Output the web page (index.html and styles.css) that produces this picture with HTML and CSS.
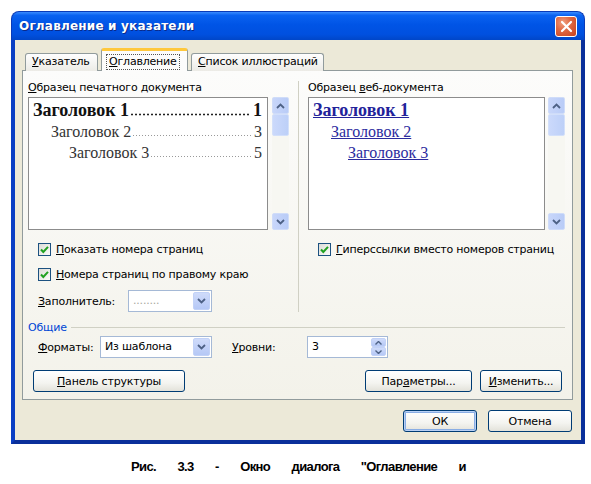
FILE: index.html
```html
<!DOCTYPE html>
<html lang="ru">
<head>
<meta charset="utf-8">
<title>Оглавление и указатели</title>
<link rel="stylesheet" href="styles.css">
</head>
<body>
<div class="window">
  <div class="titlebar">
    <span class="title">Оглавление и указатели</span>
    <span class="close"><svg width="13" height="13" viewBox="0 0 13 13"><path d="M2 2 L11 11 M11 2 L2 11" stroke="#fff" stroke-width="2.2" stroke-linecap="round"/></svg></span>
  </div>
  <div class="body">
    <div class="tabs">
      <div class="tab"><u>У</u>казатель</div>
      <div class="tab active"><span class="focus"><u>О</u>главление</span></div>
      <div class="tab"><u>С</u>писок иллюстраций</div>
    </div>
    <div class="panel">
      <div class="samples">
        <div class="col col-left">
          <div class="label"><u>О</u>бразец печатного документа</div>
          <div class="listrow">
            <div class="preview preview-print">
              <div class="toc l1"><span class="h">Заголовок 1</span><span class="dots"></span><span class="pg">1</span></div>
              <div class="toc l2"><span class="h">Заголовок 2</span><span class="dots"></span><span class="pg">3</span></div>
              <div class="toc l3"><span class="h">Заголовок 3</span><span class="dots"></span><span class="pg">5</span></div>
            </div>
            <div class="scrollbar">
              <span class="sbtn"><svg width="9" height="6" viewBox="0 0 9 6"><path d="M1 5 L4.5 1.5 L8 5" fill="none" stroke="#4d6185" stroke-width="1.8"/></svg></span>
              <span class="thumb"></span>
              <span class="track"></span>
              <span class="sbtn"><svg width="9" height="6" viewBox="0 0 9 6"><path d="M1 1 L4.5 4.5 L8 1" fill="none" stroke="#4d6185" stroke-width="1.8"/></svg></span>
            </div>
          </div>
          <div class="check"><span class="box"><svg width="13" height="13" viewBox="0 0 13 13"><path d="M3 6.5 L5.3 9 L10 3.8" fill="none" stroke="#21a121" stroke-width="2"/></svg></span><span><u>П</u>оказать номера страниц</span></div>
          <div class="check"><span class="box"><svg width="13" height="13" viewBox="0 0 13 13"><path d="M3 6.5 L5.3 9 L10 3.8" fill="none" stroke="#21a121" stroke-width="2"/></svg></span><span><u>Н</u>омера страниц по правому краю</span></div>
          <div class="fillrow">
            <span class="fieldlabel"><u>З</u>аполнитель:</span>
            <div class="combo combo-fill disabled">
              <span class="value">........</span>
              <span class="arrow"><svg width="9" height="6" viewBox="0 0 9 6"><path d="M1 1 L4.5 4.5 L8 1" fill="none" stroke="#4d6185" stroke-width="1.8"/></svg></span>
            </div>
          </div>
        </div>
        <div class="col col-right">
          <div class="label">Образец <u>в</u>еб-документа</div>
          <div class="listrow">
            <div class="preview preview-web">
              <div class="link l1">Заголовок 1</div>
              <div class="link l2">Заголовок 2</div>
              <div class="link l3">Заголовок 3</div>
            </div>
            <div class="scrollbar">
              <span class="sbtn"><svg width="9" height="6" viewBox="0 0 9 6"><path d="M1 5 L4.5 1.5 L8 5" fill="none" stroke="#4d6185" stroke-width="1.8"/></svg></span>
              <span class="thumb"></span>
              <span class="track"></span>
              <span class="sbtn"><svg width="9" height="6" viewBox="0 0 9 6"><path d="M1 1 L4.5 4.5 L8 1" fill="none" stroke="#4d6185" stroke-width="1.8"/></svg></span>
            </div>
          </div>
          <div class="check"><span class="box"><svg width="13" height="13" viewBox="0 0 13 13"><path d="M3 6.5 L5.3 9 L10 3.8" fill="none" stroke="#21a121" stroke-width="2"/></svg></span><span><u>Г</u>иперссылки вместо номеров страниц</span></div>
        </div>
      </div>
      <div class="group"><span class="gtitle">Общие</span><span class="gline"></span></div>
      <div class="formats">
        <span class="fieldlabel"><u>Ф</u>орматы:</span>
        <div class="combo combo-format">
          <span class="value">Из шаблона</span>
          <span class="arrow"><svg width="9" height="6" viewBox="0 0 9 6"><path d="M1 1 L4.5 4.5 L8 1" fill="none" stroke="#4d6185" stroke-width="1.8"/></svg></span>
        </div>
        <span class="fieldlabel levels"><u>У</u>ровни:</span>
        <div class="spin">
          <span class="value">3</span>
          <span class="spinbtns">
            <span class="sp"><svg width="7" height="4" viewBox="0 0 7 4"><path d="M0.5 3.5 L3.5 0.5 L6.5 3.5" fill="none" stroke="#4d6185" stroke-width="1.4"/></svg></span>
            <span class="sp"><svg width="7" height="4" viewBox="0 0 7 4"><path d="M0.5 0.5 L3.5 3.5 L6.5 0.5" fill="none" stroke="#4d6185" stroke-width="1.4"/></svg></span>
          </span>
        </div>
      </div>
      <div class="btnrow">
        <button class="btn btn-struct"><u>П</u>анель структуры</button>
        <span class="spacer"></span>
        <button class="btn btn-params">Пар<u>а</u>метры...</button>
        <button class="btn btn-edit"><u>И</u>зменить...</button>
      </div>
    </div>
    <div class="footer">
      <button class="btn btn-ok">ОК</button>
      <button class="btn btn-cancel">Отмена</button>
    </div>
  </div>
</div>
<div class="caption">Рис. 3.3 - Окно диалога "Оглавление и</div>
</body>
</html>
```
FILE: styles.css
```css
* { box-sizing: border-box; }
html, body { margin: 0; padding: 0; background: #fff; }
body {
  width: 591px;
  height: 484px;
  overflow: hidden;
  font-family: "DejaVu Sans", "Liberation Sans", sans-serif;
  font-size: 11px;
  letter-spacing: -0.2px;
  color: #000;
}
u { text-decoration: underline; text-underline-offset: 1px; }

.window {
  margin: 11px 0 0 11px;
  width: 574px;
  display: flex;
  flex-direction: column;
}

.titlebar {
  height: 29px;
  border-radius: 8px 8px 0 0;
  background: linear-gradient(#3a8cff 0%, #0a62f0 12%, #0054e6 45%, #0050df 80%, #0046c8 100%);
  display: flex;
  align-items: center;
  padding: 0 7px;
  border: 1px solid #0a3bb8;
  border-bottom: none;
}
.title {
  flex: 1;
  color: #fff;
  font-family: "DejaVu Sans", sans-serif;
  font-weight: bold;
  font-size: 12px;
  text-shadow: 1px 1px 0 #0a2a8a;
  letter-spacing: 0.2px;
}
.close {
  width: 22px;
  height: 21px;
  margin-top: 1px;
  border: 1px solid #fff;
  border-radius: 3px;
  background: radial-gradient(circle at 35% 30%, #f0a080 0%, #e06a45 40%, #c8401d 100%);
  display: flex;
  align-items: center;
  justify-content: center;
}

.body {
  background: #ece9d8;
  border: 4px solid #0a45d0;
  border-top: none;
  border-left-color: #0a3fc4;
  border-right-color: #0a2f9a;
  border-bottom-color: #0a2f9a;
  padding: 8px 8px 8px 7px;
  display: flex;
  flex-direction: column;
}

/* tabs */
.tabs {
  display: flex;
  align-items: flex-end;
  padding-left: 3px;
  margin-bottom: -1px;
  position: relative;
  z-index: 1;
}
.tab {
  height: 18px;
  padding: 0 6px;
  line-height: 16px;
  border: 1px solid #919b9c;
  border-bottom: none;
  border-radius: 3px 3px 0 0;
  background: linear-gradient(#fefefe, #ecebe6);
  white-space: nowrap;
}
.tab:first-child { width: 73px; }
.tab:last-child { width: 133px; margin-left: 2px; }
.tab.active {
  height: 23px;
  width: 87px;
  margin: 0 1px 0 3px;
  padding: 3px 5px 0;
  border-top: 3px solid #ffc83c;
  background: #fcfcfb;
  line-height: 15px;
}
.focus {
  display: inline-block;
  outline: 1px dotted #555;
  padding: 0 2px;
  line-height: 14px;
}

.panel {
  border: 1px solid #919b9c;
  background: linear-gradient(#fcfcfb, #f3f2ea);
  height: 330px;
  padding: 10px 6px 0 5px;
  display: flex;
  flex-direction: column;
}

.samples {
  display: grid;
  grid-template-columns: 270px 1fr;
}
.col { display: flex; flex-direction: column; }
.col-right {
  border-left: 1px solid #d0d0c4;
  padding-left: 9px;
}
.label {
  line-height: 14px;
  height: 14px;
  margin-bottom: 2px;
  white-space: nowrap;
}
.listrow {
  display: flex;
  height: 133px;
}
.preview {
  border: 1px solid #8c8c8c;
  background: #fff;
  height: 133px;
  padding: 2px 5px 0 3px;
}
.preview-print { width: 240px; margin-right: 4px; }
.preview-web { width: 237px; margin-right: 3px; }

.toc {
  display: flex;
  align-items: baseline;
  white-space: nowrap;
  font-family: "Liberation Serif", "Times New Roman", serif;
  letter-spacing: 0;
  height: 21px;
  line-height: 21px;
}
.toc .dots {
  flex: 1;
  height: 3px;
  margin: 0 2px 0 1px;
  background-image: radial-gradient(circle, #222 0.9px, transparent 1.2px);
  background-size: 4px 3px;
  background-repeat: repeat-x;
  background-position: left bottom;
}
.toc.l1 { font-size: 18px; font-weight: bold; padding-left: 1px; color: #111; }
.toc.l2 { font-size: 16px; padding-left: 19px; color: #333; }
.toc.l3 { font-size: 16px; padding-left: 37px; color: #333; }
.toc.l2 .dots, .toc.l3 .dots {
  background-image: radial-gradient(circle, #999 0.7px, transparent 1px);
  background-size: 3px 3px;
}

.link {
  font-family: "Liberation Serif", "Times New Roman", serif;
  letter-spacing: 0;
  text-decoration: underline;
  color: #2b2b9e;
  height: 21px;
  line-height: 21px;
  white-space: nowrap;
}
.link.l1 { font-size: 18px; font-weight: bold; padding-left: 1px; color: #22229a; }
.link.l2 { font-size: 16px; padding-left: 19px; }
.link.l3 { font-size: 16px; padding-left: 36px; }

.scrollbar {
  width: 17px;
  display: flex;
  flex-direction: column;
  background: #f7f7f2;
}
.sbtn {
  height: 17px;
  border-radius: 2px;
  background: linear-gradient(90deg, #c8d6fa, #b9ccf7);
  border: 1px solid #cfdcf9;
  display: flex;
  align-items: center;
  justify-content: center;
}
.thumb {
  height: 22px;
  border-radius: 2px;
  background: linear-gradient(90deg, #cbd9fb, #bdd0f8);
  border: 1px solid #d3e0fa;
}
.track { flex: 1; }

.check {
  display: flex;
  align-items: center;
  height: 13px;
  line-height: 13px;
  margin-left: 10px;
  margin-top: 12px;
  white-space: nowrap;
}
.listrow + .check { margin-top: 13px; }
.box {
  width: 13px;
  height: 13px;
  border: 1px solid #1c5180;
  background: linear-gradient(135deg, #dcdcd7, #fbfbf9);
  margin-right: 5px;
  display: flex;
  align-items: center;
  justify-content: center;
  flex: none;
}
.box svg { display: block; margin: -1px; }

.fillrow {
  display: flex;
  align-items: center;
  margin-top: 9px;
  margin-left: 10px;
  height: 22px;
}
.fieldlabel { white-space: nowrap; }
.fillrow .fieldlabel { width: 90px; }

.combo {
  height: 22px;
  border: 1px solid #a5b9d6;
  background: #fff;
  display: flex;
  align-items: stretch;
  padding: 1px;
}
.combo .value {
  flex: 1;
  padding-left: 3px;
  line-height: 18px;
  white-space: nowrap;
}
.combo .arrow {
  width: 17px;
  border-radius: 2px;
  background: linear-gradient(#cfdbfa, #b5c8f6);
  border: 1px solid #c2d2f7;
  display: flex;
  align-items: center;
  justify-content: center;
}
.combo-fill { width: 84px; }
.combo.disabled .value { color: #a8a8a0; }
.combo-format { width: 112px; }

.group {
  display: flex;
  align-items: center;
  margin-top: 8px;
  height: 14px;
}
.gtitle { color: #0046d5; margin-right: 4px; }
.gline { flex: 1; height: 1px; background: #d0d0c4; margin-right: 1px; }

.formats {
  display: flex;
  align-items: center;
  margin-top: 2px;
  margin-left: 10px;
  height: 22px;
}
.formats .fieldlabel:first-child { width: 62px; }
.levels { margin-left: 20px; width: 75px; }
.spin {
  width: 81px;
  height: 22px;
  border: 1px solid #a5b9d6;
  background: #fff;
  display: flex;
  padding: 1px;
}
.spin .value { flex: 1; padding-left: 3px; line-height: 18px; }
.spinbtns { width: 15px; display: flex; flex-direction: column; }
.sp {
  flex: 1;
  background: linear-gradient(#cfdbfa, #b5c8f6);
  border: 1px solid #c2d2f7;
  border-radius: 2px;
  display: flex;
  align-items: center;
  justify-content: center;
}

.btnrow {
  display: flex;
  margin-top: 12px;
  padding: 0 4px 0 5px;
  height: 22px;
}
.spacer { flex: 1; }
.btn {
  height: 22px;
  font-family: "DejaVu Sans", "Liberation Sans", sans-serif;
  font-size: 11px;
  letter-spacing: -0.2px;
  color: #000;
  border: 1px solid #003c74;
  border-radius: 3px;
  background: linear-gradient(#ffffff 0%, #f4f4f0 60%, #e3e2da 100%);
  padding: 0;
  white-space: nowrap;
}
.btn-struct { width: 152px; }
.btn-params { width: 107px; margin-right: 8px; }
.btn-edit { width: 82px; }

.footer {
  display: flex;
  justify-content: flex-end;
  margin-top: 10px;
  padding-right: 1px;
  height: 22px;
}
.btn-ok {
  width: 74px;
  margin-right: 11px;
  box-shadow: inset 0 0 0 1px #b8d0f5, inset 0 0 0 2px #89ade4;
}
.btn-cancel { width: 84px; }

.caption {
  margin: 15px 0 0 131px;
  width: 335px;
  font-family: "Liberation Sans", Arial, sans-serif;
  font-weight: bold;
  font-size: 13px;
  line-height: 16px;
  text-align: justify;
  text-align-last: justify;
  letter-spacing: -0.6px;
}
```
